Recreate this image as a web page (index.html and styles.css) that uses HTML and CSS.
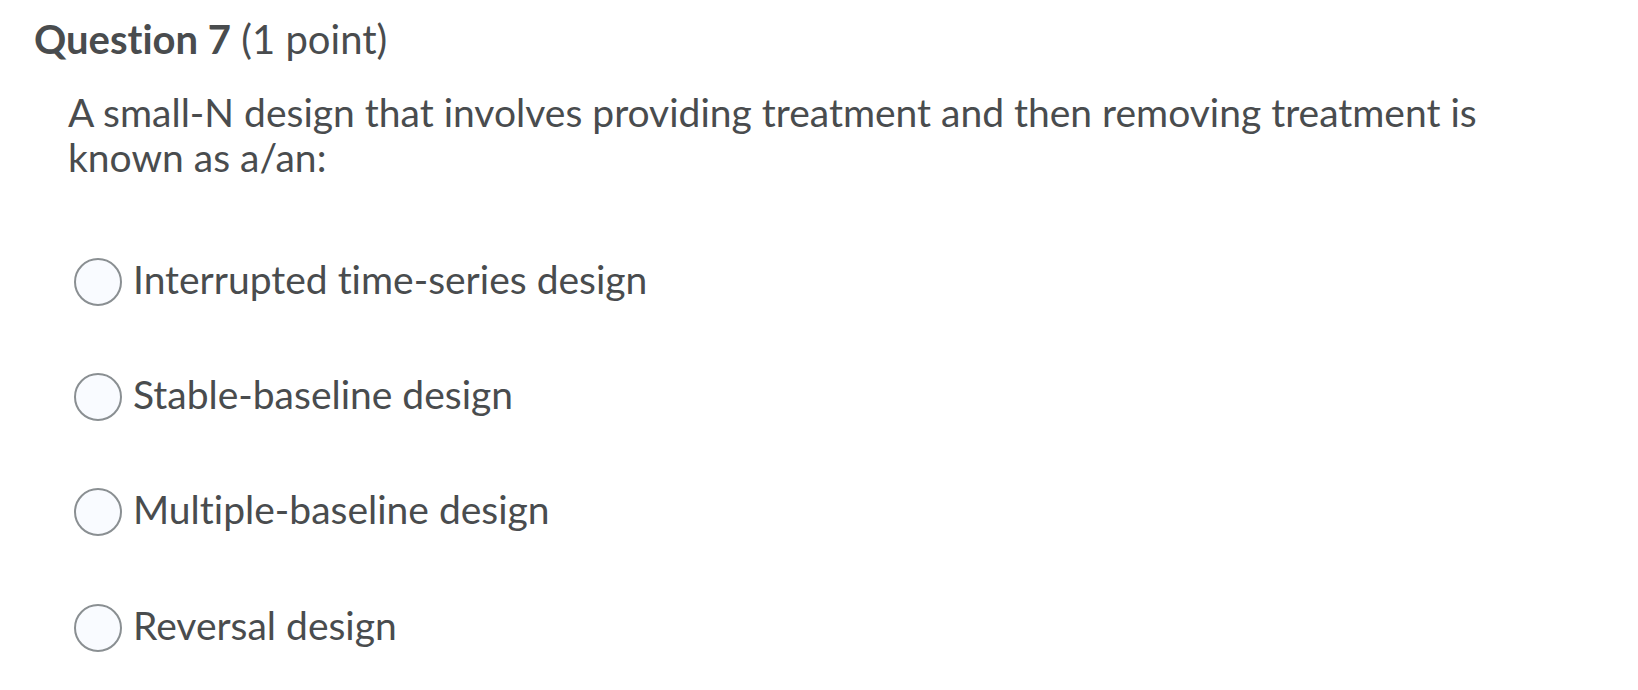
FILE: index.html
```html
<!DOCTYPE html>
<html>
<head>
<meta charset="utf-8">
<link rel="stylesheet" href="styles.css">
</head>
<body>
<div class="question">
  <h2 class="q-title"><strong>Question 7</strong> <span class="q-points">(1 point)</span></h2>
  <p class="q-text">A small-N design that involves providing treatment and then removing treatment is known as a/an:</p>
  <div class="options">
    <label class="option"><span class="radio"></span><span class="opt-text">Interrupted time-series design</span></label>
    <label class="option"><span class="radio"></span><span class="opt-text">Stable-baseline design</span></label>
    <label class="option"><span class="radio"></span><span class="opt-text">Multiple-baseline design</span></label>
    <label class="option"><span class="radio"></span><span class="opt-text">Reversal design</span></label>
  </div>
</div>
</body>
</html>
```
FILE: styles.css
```css
html, body {
  margin: 0;
  padding: 0;
  background: #ffffff;
}
body {
  font-family: Lato, "Open Sans", sans-serif;
  color: #494c4e;
  font-variant-ligatures: none;
  font-feature-settings: "liga" 0, "clig" 0;
}
.question {
  padding: 16px 0 0 34px;
}
.q-title {
  margin: 0;
  font-size: 40px;
  line-height: 47px;
  font-weight: 400;
}
.q-title strong {
  font-weight: 700;
}
.q-text {
  margin: 27px 0 0 34px;
  font-size: 39px;
  line-height: 45px;
  max-width: 1440px;
}
.options {
  margin: 78px 0 0 40px;
  display: flex;
  flex-direction: column;
  gap: 67.2px;
}
.option {
  display: flex;
  align-items: center;
  gap: 11px;
  font-size: 39px;
  height: 48px;
}
.opt-text {
  line-height: 40px;
  padding-bottom: 6px;
}
.radio {
  box-sizing: border-box;
  width: 48px;
  height: 48px;
  border: 2px solid #8a8f92;
  border-radius: 50%;
  background: #f9fbff;
  flex: none;
}
```
